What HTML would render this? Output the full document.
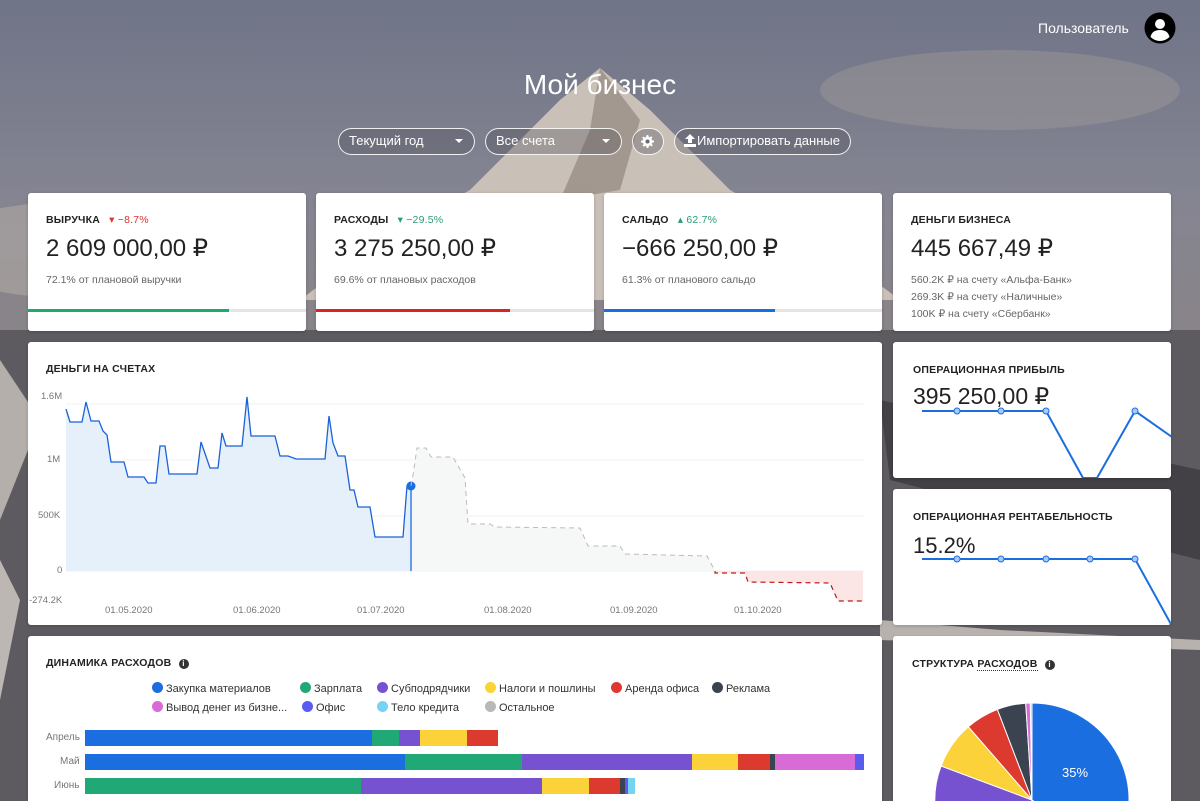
<!DOCTYPE html>
<html><head><meta charset="utf-8"><style>
*{box-sizing:border-box;margin:0;padding:0}
html,body{width:1200px;height:801px;overflow:hidden}
body{position:relative;font-family:"Liberation Sans",sans-serif;color:#222}
.bg{position:absolute;left:0;top:0}
.card{position:absolute;background:#fff;border-radius:3px;overflow:hidden;box-shadow:0 1px 3px rgba(0,0,0,.2)}
.lbl{position:absolute;font-size:10.5px;font-weight:bold;letter-spacing:.2px;color:#222}
.big{position:absolute;font-size:24px;color:#222}
.sub{position:absolute;font-size:10.5px;color:#666;line-height:17px}
.bar{position:absolute;left:0;right:0;height:3px;background:#e5e5e5;top:116px}
.pill{position:absolute;top:128px;height:27px;border:1.5px solid rgba(255,255,255,.9);border-radius:14px;color:#fff;font-size:13px;line-height:24px;padding-left:10px;background:rgba(80,80,90,.35)}
.caret{position:absolute;right:11px;top:10px;width:0;height:0;border-left:4px solid transparent;border-right:4px solid transparent;border-top:4px solid #fff}
.lg{position:absolute;font-size:11px;color:#333;white-space:nowrap}
.lg i{display:inline-block;width:11px;height:11px;border-radius:50%;vertical-align:-1px;margin-right:3px}
.ax{position:absolute;font-size:9.5px;color:#777}
</style></head><body>
<svg class="bg" width="1200" height="801">
<defs><linearGradient id="sky" x1="0" y1="0" x2="0" y2="1"><stop offset="0" stop-color="#6f7487"/><stop offset=".25" stop-color="#858592"/><stop offset=".45" stop-color="#8a8486"/><stop offset="1" stop-color="#5a575b"/></linearGradient></defs>
<rect width="1200" height="801" fill="url(#sky)"/>
<ellipse cx="1000" cy="90" rx="180" ry="40" fill="#a09896" opacity=".45"/>
<ellipse cx="100" cy="250" rx="180" ry="50" fill="#b8afa8" opacity=".5"/>
<polygon points="600,68 560,100 470,190 380,240 300,300 900,300 820,240 730,190 650,110" fill="#c9c0b8"/>
<polygon points="600,68 590,130 560,200 620,190 640,120" fill="#7d7068" opacity=".5"/>
<rect x="0" y="330" width="1200" height="471" fill="#5e5b60"/>
<polygon points="0,360 40,420 0,520" fill="#b5afab"/>
<polygon points="0,560 20,600 0,700" fill="#bdb7b3"/>
<polygon points="880,400 1200,470 1200,560 890,480" fill="#434146"/>
<polygon points="880,620 1000,630 1200,640 1200,650 880,640" fill="#b8b2ae"/>
</svg>

<div style="position:absolute;left:1038px;top:20px;color:#fff;font-size:14px">Пользователь</div>
<svg style="position:absolute;left:1144px;top:12px" width="32" height="32"><circle cx="16" cy="16" r="15.5" fill="#000"/><circle cx="16" cy="12" r="5" fill="#fff"/><path d="M6.5 25 Q8 18 16 18 Q24 18 25.5 25 Q21 29 16 29 Q11 29 6.5 25Z" fill="#fff"/></svg>
<div style="position:absolute;left:0;width:1200px;top:69px;text-align:center;color:#fff;font-size:28px">Мой бизнес</div>

<div class="pill" style="left:338px;width:137px">Текущий год<span class="caret"></span></div>
<div class="pill" style="left:485px;width:137px">Все счета<span class="caret"></span></div>
<div class="pill" style="left:632px;width:32px;padding:0"><svg style="position:absolute;left:8px;top:6px" width="13" height="13" viewBox="0 0 16 16"><path fill="#fff" d="M7 0h2l.4 2.2 1.5.6 1.8-1.3 1.4 1.4-1.3 1.8.6 1.5L16 7v2l-2.2.4-.6 1.5 1.3 1.8-1.4 1.4-1.8-1.3-1.5.6L9 16H7l-.4-2.2-1.5-.6-1.8 1.3-1.4-1.4 1.3-1.8-.6-1.5L0 9V7l2.2-.4.6-1.5-1.3-1.8 1.4-1.4 1.8 1.3 1.5-.6z"/><circle cx="8" cy="8" r="2.5" fill="#6a6a72"/></svg></div>
<div class="pill" style="left:674px;width:177px;padding-left:8px"><svg style="vertical-align:-2px" width="14" height="13"><path d="M7 0l5 5H9v4H5V5H2z M1 10h12v3H1z" fill="#fff"/></svg>Импортировать данные</div>

<div class="card" style="left:28px;top:193px;width:278px;height:138px">
<div class="lbl" style="left:18px;top:21px">ВЫРУЧКА <span style="color:#d33;font-weight:normal;margin-left:6px">▾ −8.7%</span></div>
<div class="big" style="left:18px;top:41px">2 609 000,00 ₽</div>
<div class="sub" style="left:18px;top:79px">72.1% от плановой выручки</div>
<div class="bar"><div style="width:201px;height:3px;background:#1fa971"></div></div></div>
<div class="card" style="left:316px;top:193px;width:278px;height:138px">
<div class="lbl" style="left:18px;top:21px">РАСХОДЫ <span style="color:#2a9d70;font-weight:normal;margin-left:6px">▾ −29.5%</span></div>
<div class="big" style="left:18px;top:41px">3 275 250,00 ₽</div>
<div class="sub" style="left:18px;top:79px">69.6% от плановых расходов</div>
<div class="bar"><div style="width:194px;height:3px;background:#dd2222"></div></div></div>
<div class="card" style="left:604px;top:193px;width:278px;height:138px">
<div class="lbl" style="left:18px;top:21px">САЛЬДО <span style="color:#2a9d70;font-weight:normal;margin-left:6px">▴ 62.7%</span></div>
<div class="big" style="left:18px;top:41px">−666 250,00 ₽</div>
<div class="sub" style="left:18px;top:79px">61.3% от планового сальдо</div>
<div class="bar"><div style="width:171px;height:3px;background:#1b6ee0"></div></div></div>
<div class="card" style="left:893px;top:193px;width:278px;height:138px">
<div class="lbl" style="left:18px;top:21px">ДЕНЬГИ БИЗНЕСА</div>
<div class="big" style="left:18px;top:41px">445 667,49 ₽</div>
<div class="sub" style="left:18px;top:79px">560.2K ₽ на счету «Альфа-Банк»<br>269.3K ₽ на счету «Наличные»<br>100K ₽ на счету «Сбербанк»</div></div>

<div class="card" style="left:28px;top:342px;width:854px;height:283px">
<div class="lbl" style="left:18px;top:21px">ДЕНЬГИ НА СЧЕТАХ</div>
<div class="ax" style="left:13px;top:49px">1.6M</div>
<div class="ax" style="left:19px;top:112px">1M</div>
<div class="ax" style="left:10px;top:168px">500K</div>
<div class="ax" style="left:29px;top:223px">0</div>
<div class="ax" style="left:1px;top:253px">-274.2K</div>
<div class="ax" style="left:77px;top:263px">01.05.2020</div>
<div class="ax" style="left:205px;top:263px">01.06.2020</div>
<div class="ax" style="left:329px;top:263px">01.07.2020</div>
<div class="ax" style="left:456px;top:263px">01.08.2020</div>
<div class="ax" style="left:582px;top:263px">01.09.2020</div>
<div class="ax" style="left:706px;top:263px">01.10.2020</div>
</div>
<svg style="position:absolute;left:0;top:0" width="1200" height="801">
<g stroke="#f2f2f2" stroke-width="1"><line x1="66" y1="404" x2="864" y2="404"/><line x1="66" y1="460" x2="864" y2="460"/><line x1="66" y1="516" x2="864" y2="516"/><line x1="66" y1="571" x2="864" y2="571"/></g>
<path d="M66,409 L70,422 82,422 86,402 91,421 99,421 103,431 107,435 111,462 124,462 128,477 144,477 148,483 156,483 160,446 165,446 169,474 197,474 201,442 210,468 218,468 222,433 226,446 242,446 247,397 251,436 275,436 280,456 288,456 296,459 325,459 329,416 333,443 338,456 345,456 350,490 354,490 358,507 370,507 375,537 403,537 407,486 411,486 L411,571 66,571Z" fill="#e6f0fb"/>
<path d="M411,486 L413,475 417,448 426,448 431,457 453,457 465,478 468,524 490,524 495,527 580,528 588,546 620,546 625,554 707,556 715,571 L411,571Z" fill="#f6f7f7"/>
<path d="M715,571 L715,573 745,573 748,582 830,583 838,601 863,601 863,571Z" fill="#fbe5e5"/>
<path d="M66,409 L70,422 82,422 86,402 91,421 99,421 103,431 107,435 111,462 124,462 128,477 144,477 148,483 156,483 160,446 165,446 169,474 197,474 201,442 210,468 218,468 222,433 226,446 242,446 247,397 251,436 275,436 280,456 288,456 296,459 325,459 329,416 333,443 338,456 345,456 350,490 354,490 358,507 370,507 375,537 403,537 407,486 411,486" fill="none" stroke="#1b62d8" stroke-width="1.3"/>
<line x1="411" y1="486" x2="411" y2="571" stroke="#1b6ee0" stroke-width="1.3"/>
<circle cx="411" cy="486" r="4.5" fill="#1b6ee0"/>
<path d="M411,486 L413,475 417,448 426,448 431,457 453,457 465,478 468,524 490,524 495,527 580,528 588,546 620,546 625,554 707,556 715,571" fill="none" stroke="#bbb" stroke-width="1" stroke-dasharray="5,4"/>
<path d="M715,571 L715,573 745,573 748,582 830,583 838,601 863,601" fill="none" stroke="#c01818" stroke-width="1.2" stroke-dasharray="5,4"/>
</svg>

<div class="card" style="left:893px;top:342px;width:278px;height:136px">
<div class="lbl" style="left:20px;top:22px">ОПЕРАЦИОННАЯ ПРИБЫЛЬ</div>
<div class="big" style="left:20px;top:41px;font-size:23px">395 250,00 ₽</div>
<svg style="position:absolute;left:0;top:0" width="278" height="136"><polyline points="29,69 64,69 108,69 153,69 190,136 204,136 242,69 279,95" fill="none" stroke="#1b6ee0" stroke-width="2"/><g fill="#a8c8f5" stroke="#1b6ee0" stroke-width="1"><circle cx="64" cy="69" r="3"/><circle cx="108" cy="69" r="3"/><circle cx="153" cy="69" r="3"/><circle cx="242" cy="69" r="3"/></g></svg></div>
<div class="card" style="left:893px;top:489px;width:278px;height:136px">
<div class="lbl" style="left:20px;top:22px">ОПЕРАЦИОННАЯ РЕНТАБЕЛЬНОСТЬ</div>
<div class="big" style="left:20px;top:44px;font-size:22px">15.2%</div>
<svg style="position:absolute;left:0;top:0" width="278" height="136"><polyline points="29,70 64,70 108,70 153,70 197,70 242,70 279,137" fill="none" stroke="#1b6ee0" stroke-width="2"/><g fill="#a8c8f5" stroke="#1b6ee0" stroke-width="1"><circle cx="64" cy="70" r="3"/><circle cx="108" cy="70" r="3"/><circle cx="153" cy="70" r="3"/><circle cx="197" cy="70" r="3"/><circle cx="242" cy="70" r="3"/></g></svg></div>

<div class="card" style="left:28px;top:636px;width:854px;height:170px">
<div class="lbl" style="left:18px;top:21px">ДИНАМИКА РАСХОДОВ <span style="display:inline-block;width:10px;height:10px;border-radius:50%;background:#333;color:#fff;font-size:8px;text-align:center;line-height:10px;margin-left:4px">i</span></div>
<div class="lg" style="left:124px;top:46px"><i style="background:#1b6ee0"></i>Закупка материалов</div>
<div class="lg" style="left:272px;top:46px"><i style="background:#20a877"></i>Зарплата</div>
<div class="lg" style="left:349px;top:46px"><i style="background:#7652d1"></i>Субподрядчики</div>
<div class="lg" style="left:457px;top:46px"><i style="background:#fcd23b"></i>Налоги и пошлины</div>
<div class="lg" style="left:583px;top:46px"><i style="background:#dc3a2f"></i>Аренда офиса</div>
<div class="lg" style="left:684px;top:46px"><i style="background:#3b4250"></i>Реклама</div>
<div class="lg" style="left:124px;top:65px"><i style="background:#d86bd6"></i>Вывод денег из бизне...</div>
<div class="lg" style="left:274px;top:65px"><i style="background:#5a5cf0"></i>Офис</div>
<div class="lg" style="left:349px;top:65px"><i style="background:#75d4f4"></i>Тело кредита</div>
<div class="lg" style="left:457px;top:65px"><i style="background:#b8b8b8"></i>Остальное</div>
<div class="ax" style="left:18px;top:96px;font-size:10px">Апрель</div>
<div class="ax" style="left:32px;top:120px;font-size:10px">Май</div>
<div class="ax" style="left:26px;top:144px;font-size:10px">Июнь</div>
</div>
<svg style="position:absolute;left:0;top:0" width="1200" height="801">
<g transform="translate(0,730)">
<rect x="85" width="287" height="16" fill="#1b6ee0"/><rect x="372" width="27" height="16" fill="#20a877"/><rect x="399" width="21" height="16" fill="#7652d1"/><rect x="420" width="47" height="16" fill="#fcd23b"/><rect x="467" width="31" height="16" fill="#dc3a2f"/>
</g>
<g transform="translate(0,754)">
<rect x="85" width="320" height="16" fill="#1b6ee0"/><rect x="405" width="117" height="16" fill="#20a877"/><rect x="522" width="170" height="16" fill="#7652d1"/><rect x="692" width="46" height="16" fill="#fcd23b"/><rect x="738" width="32" height="16" fill="#dc3a2f"/><rect x="770" width="5" height="16" fill="#3b4250"/><rect x="775" width="80" height="16" fill="#d86bd6"/><rect x="855" width="9" height="16" fill="#5a5cf0"/>
</g>
<g transform="translate(0,778)">
<rect x="85" width="276" height="16" fill="#20a877"/><rect x="361" width="181" height="16" fill="#7652d1"/><rect x="542" width="47" height="16" fill="#fcd23b"/><rect x="589" width="31" height="16" fill="#dc3a2f"/><rect x="620" width="5" height="16" fill="#3b4250"/><rect x="625" width="3" height="16" fill="#5a5cf0"/><rect x="628" width="7" height="16" fill="#75d4f4"/>
</g>
</svg>

<div class="card" style="left:893px;top:636px;width:278px;height:170px">
<div class="lbl" style="left:19px;top:22px">СТРУКТУРА <span style="border-bottom:1px dotted #333">РАСХОДОВ</span> <span style="display:inline-block;width:10px;height:10px;border-radius:50%;background:#333;color:#fff;font-size:8px;text-align:center;line-height:10px;margin-left:4px">i</span></div>
</div>
<svg style="position:absolute;left:0;top:0" width="1200" height="801">
<g stroke="#fff" stroke-width="1">
<path d="M1032,800 L1032,703 A97,97 0 0 1 1110.5,857 Z" fill="#1b6ee0"/>
<path d="M1032,800 L1110.5,857 A97,97 0 0 1 948,848.5 Z" fill="#20a877"/>
<path d="M1032,800 L1010,895 A97,97 0 0 1 941.1,766 Z" fill="#7652d1"/>
<path d="M1032,800 L941.1,766 A97,97 0 0 1 968.4,726.8 Z" fill="#fcd23b"/>
<path d="M1032,800 L968.4,726.8 A97,97 0 0 1 997.4,709.4 Z" fill="#dc3a2f"/>
<path d="M1032,800 L997.4,709.4 A97,97 0 0 1 1025.7,703.2 Z" fill="#3b4250"/>
<path d="M1032,800 L1025.7,703.2 A97,97 0 0 1 1030.3,703 Z" fill="#d86bd6"/>
<path d="M1032,800 L1030.3,703 A97,97 0 0 1 1032,703 Z" fill="#b8b8b8"/>
</g>
<text x="1075" y="777" fill="#fff" font-size="13" text-anchor="middle" font-family="Liberation Sans, sans-serif">35%</text>
</svg>
</body></html>
